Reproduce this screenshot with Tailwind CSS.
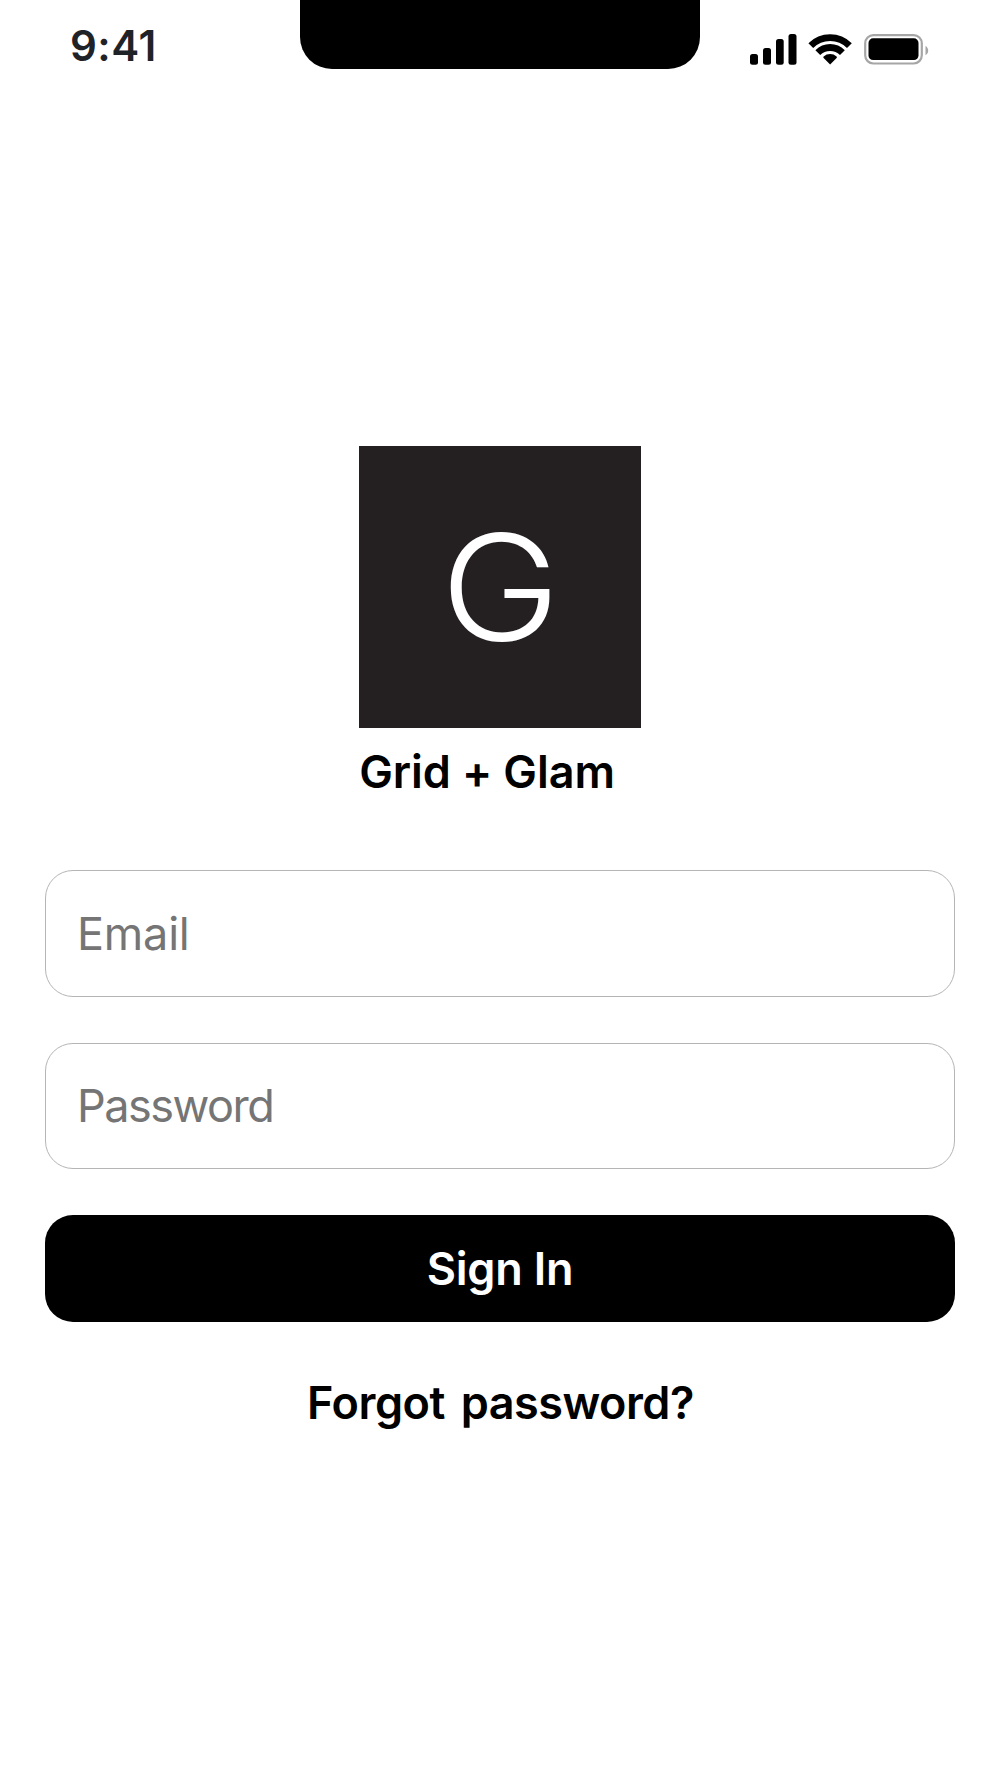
<!DOCTYPE html>
<html lang="en">

<head>
    <meta charset="UTF-8">
    <meta name="viewport" content="width=device-width, initial-scale=1.0">
    <title>Grid + Glam</title>
    <script src="https://cdn.jsdelivr.net/npm/@tailwindcss/browser@4"></script>
</head>

<body class="bg-white text-black font-['Inter',sans-serif] [font-feature-settings:'calt'_0] h-screen overflow-hidden">
    <!-- status bar -->
    <header class="flex justify-between items-start h-[69px]">
        <div class="w-[300px] pl-[70px] pt-[16px] text-[42px] leading-[60px] font-semibold tracking-[0.5px] text-[#1f2328]">9:41</div>
        <div class="w-[400px] h-[68.5px] bg-black rounded-b-[32px]"></div>
        <div class="w-[300px] pl-[50px] pt-[34px]">
            <svg width="179" height="31" viewBox="0 0 179 31">
                <rect x="0" y="20" width="8" height="10.7" rx="2.5" />
                <rect x="13" y="14" width="8" height="16.7" rx="2.5" />
                <rect x="26" y="5" width="7.7" height="25.7" rx="2.5" />
                <rect x="38.5" y="0" width="8" height="30.7" rx="2.5" />
                <g fill="none" stroke="#000" stroke-width="6.8">
                    <path d="M60.8 11.7a27.3 27.3 0 0 1 38.6 0" />
                    <path d="M67.8 18.6a17.4 17.4 0 0 1 24.6 0" />
                </g>
                <path d="M80.1 30.4l-6.5-6.5a1 1 0 0 1 0-1.4a10 10 0 0 1 13 0a1 1 0 0 1 0 1.4z" />
                <rect x="115.2" y="1.1" width="56.6" height="28.4" rx="8.2" fill="none" stroke="#a6a6a6" stroke-width="2.2" />
                <rect x="118.5" y="4.3" width="50" height="21.7" rx="4.6" />
                <path d="M175.5 12v9.2c3.6-1.6 3.6-7.6 0-9.2z" fill="#a6a6a6" />
            </svg>
        </div>
    </header>

    <main class="mt-[377px] px-[45px]">
        <div class="w-[281.5px] mx-auto">
            <svg class="block bg-[#241f21]" width="281.5" height="282" viewBox="0 0 281.5 282">
                <text transform="translate(81.4 194.5) scale(1.09 1)" font-size="148" font-weight="300" fill="#fff">G</text>
            </svg>
            <h1 class="mt-[17px] text-[45px] leading-[54px] font-semibold tracking-[-0.1px] whitespace-nowrap">Grid + Glam</h1>
        </div>

        <form class="mt-[71px] flex flex-col">
            <input type="text" placeholder="Email" class="h-[127px] rounded-[28px] border border-[#b5b5b5] px-[31px] text-[45px] tracking-[-0.2px] placeholder:text-[#757575]">
            <input type="password" placeholder="Password" class="mt-[46px] h-[126px] rounded-[28px] border border-[#b5b5b5] px-[31px] pb-[2px] text-[45px] tracking-[-1.5px] placeholder:text-[#757575]">
            <button type="button" class="mt-[46px] h-[107px] rounded-[28px] bg-black text-[45px] font-semibold tracking-[-0.2px] text-white">Sign In</button>
        </form>

        <a href="#" class="mt-[54px] block pl-px text-center text-[45px] leading-[54px] font-semibold tracking-[-0.5px] [word-spacing:5px]">Forgot password?</a>
    </main>
</body>

</html>
